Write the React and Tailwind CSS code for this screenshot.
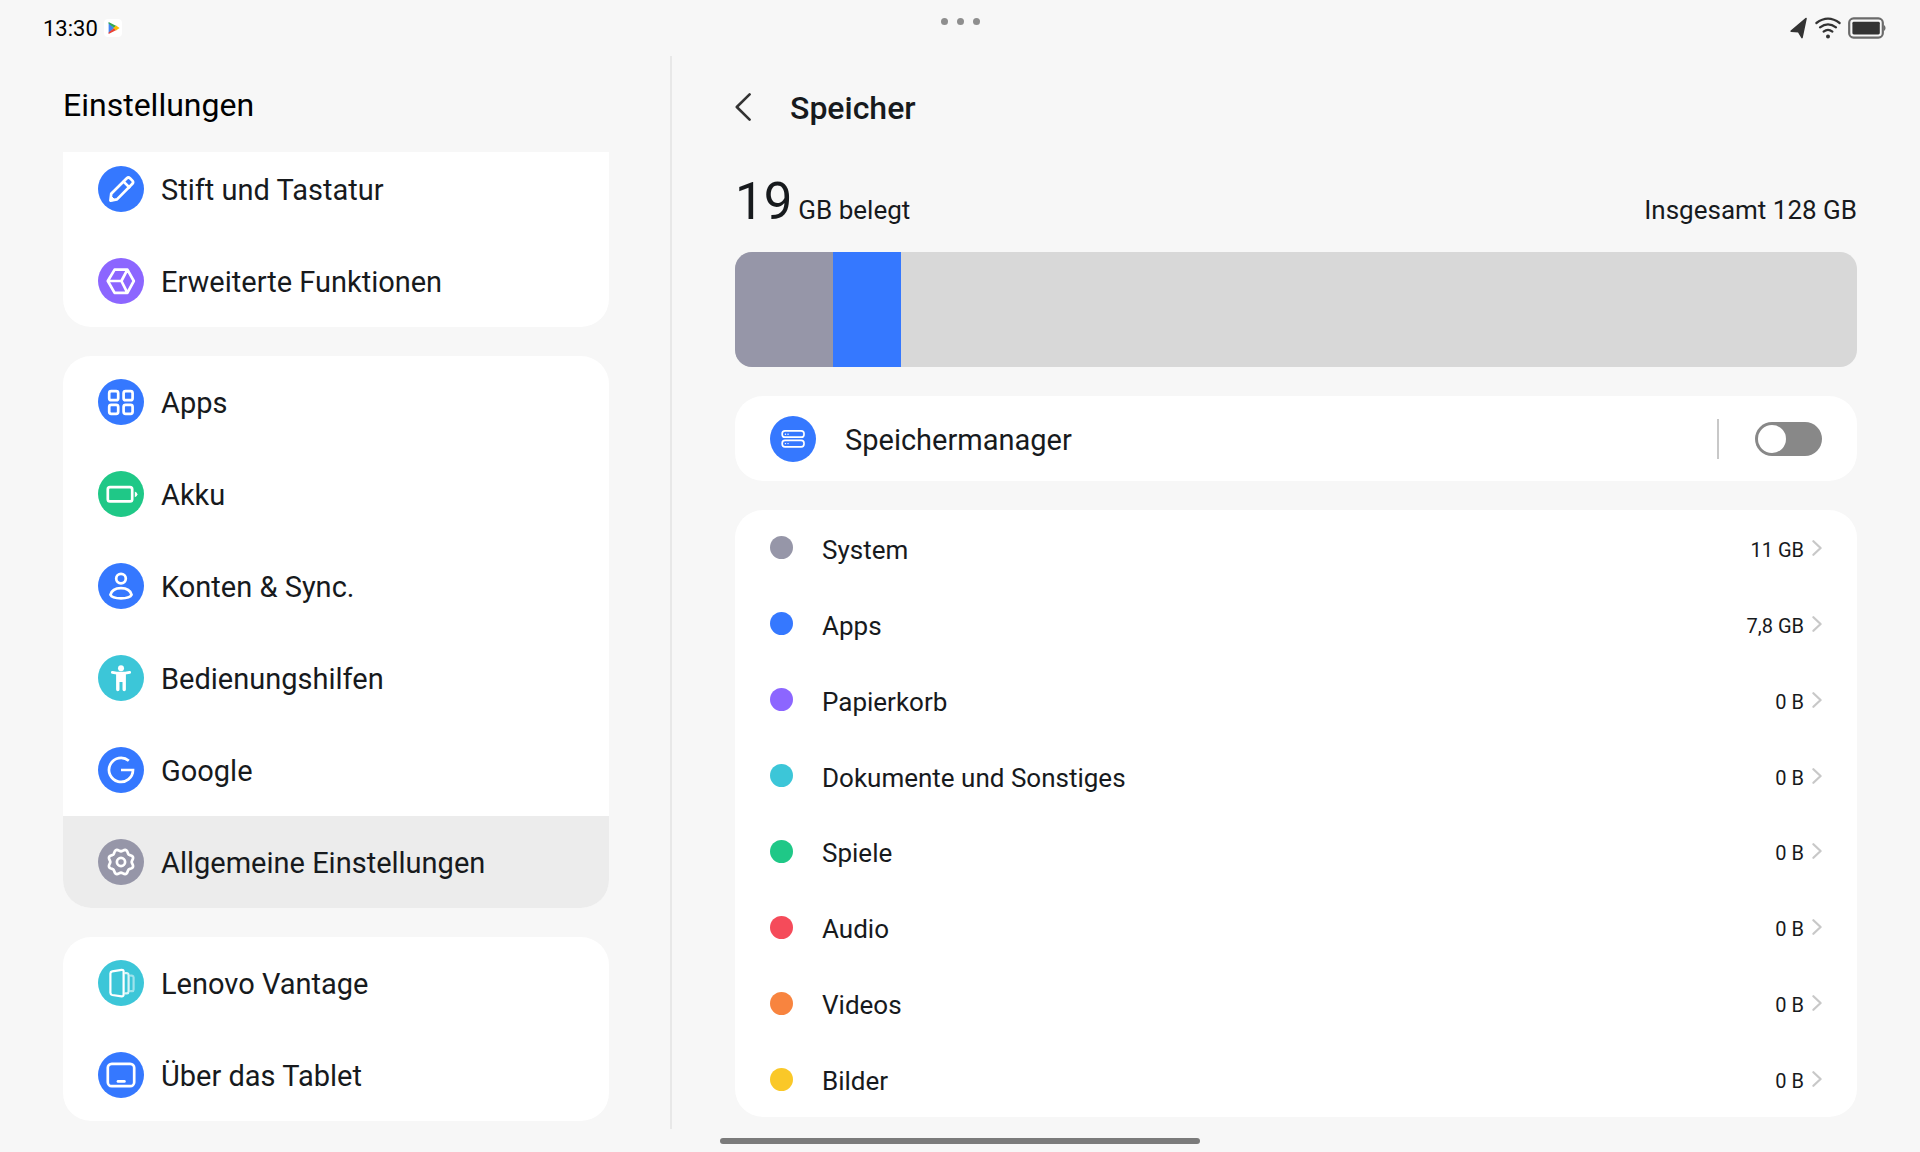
import React, { useState } from "react";
import { clsx } from "clsx";

// Eight soft teeth around the centre of a 46px badge
const gearPath =
  Array.from({ length: 96 }, (_, i) => {
    const a = (i / 96) * Math.PI * 2;
    const r = 11.8 - 1.1 * Math.cos(8 * a);
    const x = (23 + r * Math.cos(a)).toFixed(2);
    const y = (23 + r * Math.sin(a)).toFixed(2);
    return `${i === 0 ? "M" : "L"}${x} ${y}`;
  }).join(" ") + " Z";

const Badge = ({ className, children }) => (
  <svg
    viewBox="0 0 46 46"
    aria-hidden="true"
    className={clsx("size-[46px] shrink-0 rounded-full", className)}
    fill="none"
    stroke="#fff"
    strokeWidth="2.7"
    strokeLinecap="round"
    strokeLinejoin="round"
  >
    {children}
  </svg>
);

const menuGroups = [
  {
    id: "devices",
    className: "h-[175px] justify-end rounded-b-[28px]",
    items: [
      {
        label: "Stift und Tastatur",
        color: "bg-[#3578ff]",
        icon: (
          <>
            <path d="M12.4 34.6 L13.2 27.8 L28.8 12.2 Q30.4 10.8 32 12.2 L34.4 14.6 Q35.8 16.2 34.4 17.8 L19 33.4 Z" />
            <path d="M25.6 15.6 L31.2 21.2" />
            <path d="M12.4 34.6 L13 30 L17 34 Z" fill="#fff" strokeWidth="1" />
          </>
        ),
      },
      {
        label: "Erweiterte Funktionen",
        color: "bg-[#8c66ff]",
        icon: (
          <path d="M16.6 11.6 H29.4 L35.8 23 L29.4 34.8 H16.6 L9.8 23 Z M9.8 23 H23.4 L29.4 11.6 M23.4 23 L29.4 34.8" />
        ),
      },
    ],
  },
  {
    id: "system",
    className: "rounded-[28px]",
    items: [
      {
        label: "Apps",
        color: "bg-[#3578ff]",
        icon: (
          <>
            <rect x="11.2" y="12.2" width="9" height="9" rx="2" />
            <rect x="25.6" y="12.2" width="9" height="9" rx="2" />
            <rect x="11.2" y="25.8" width="9" height="9" rx="2" />
            <rect x="25.6" y="25.8" width="9" height="9" rx="2" />
          </>
        ),
      },
      {
        label: "Akku",
        color: "bg-[#1fc887]",
        icon: (
          <>
            <rect x="9.8" y="16.2" width="24.4" height="14.2" rx="2.2" />
            <path
              d="M36.8 20.4 Q39.4 21.2 39.4 23.3 Q39.4 25.4 36.8 26.2 Z"
              fill="#fff"
              stroke="none"
            />
          </>
        ),
      },
      {
        label: "Konten & Sync.",
        color: "bg-[#3578ff]",
        icon: (
          <>
            <circle cx="23" cy="15.6" r="4.8" />
            <path d="M12.4 31.8 C13.6 27.4 17.6 25.2 23 25.2 C28.4 25.2 32.4 27.4 33.6 31.8 C32.4 34.4 28 35.4 23 35.4 C18 35.4 13.6 34.4 12.4 31.8 Z" />
          </>
        ),
      },
      {
        label: "Bedienungshilfen",
        color: "bg-[#3cc6d8]",
        icon: (
          <>
            <circle cx="23" cy="13.3" r="3" fill="#fff" stroke="none" />
            <path d="M14.4 17.4 Q23 19.2 31.6 17.4" strokeWidth="3" />
            <path d="M19.8 19.4 V34.6 M26.2 19.4 V34.6" strokeWidth="3.4" />
            <path d="M20 18 H26 V27 H20 Z" fill="#fff" stroke="none" />
          </>
        ),
      },
      {
        label: "Google",
        color: "bg-[#3578ff]",
        icon: (
          <path
            d="M30.8 13.8 A12 12 0 1 0 35 23 H23"
            strokeLinecap="butt"
            strokeLinejoin="miter"
          />
        ),
      },
      {
        label: "Allgemeine Einstellungen",
        color: "bg-[#9696a8]",
        active: true,
        icon: (
          <>
            <path d={gearPath} />
            <circle cx="23" cy="23" r="4.1" />
          </>
        ),
      },
    ],
  },
  {
    id: "about",
    className: "rounded-[28px]",
    items: [
      {
        label: "Lenovo Vantage",
        color: "bg-[#3cc6d8]",
        icon: (
          <g strokeWidth="2.2">
            <path d="M14.2 11.4 L23.6 9.8 Q25.6 9.6 25.6 11.6 V34.6 Q25.6 36.6 23.6 36.4 L14.2 35 Q12.4 34.6 12.4 32.8 V13.6 Q12.4 11.8 14.2 11.4 Z" />
            <path
              d="M27.4 13.2 H29 Q30.6 13.4 30.6 15 V31.6 Q30.6 33.2 29 33.4 H27.4"
              opacity="0.8"
            />
            <path
              d="M32.6 15.6 H34 Q35.6 15.8 35.6 17.4 V29.4 Q35.6 31 34 31.2 H32.6"
              opacity="0.5"
            />
          </g>
        ),
      },
      {
        label: "Über das Tablet",
        color: "bg-[#3578ff]",
        icon: (
          <>
            <rect x="9.8" y="11.8" width="26.4" height="22.4" rx="4" />
            <path d="M20 29.4 H26.4" />
          </>
        ),
      },
    ],
  },
];

const categories = [
  { label: "System", size: "11 GB", dot: "bg-[#9696a8]", share: 8.7 },
  { label: "Apps", size: "7,8 GB", dot: "bg-[#3578ff]", share: 6.1 },
  { label: "Papierkorb", size: "0 B", dot: "bg-[#8c66ff]", share: 0 },
  { label: "Dokumente und Sonstiges", size: "0 B", dot: "bg-[#3cc6d8]", share: 0 },
  { label: "Spiele", size: "0 B", dot: "bg-[#1fc887]", share: 0 },
  { label: "Audio", size: "0 B", dot: "bg-[#f54b5a]", share: 0 },
  { label: "Videos", size: "0 B", dot: "bg-[#f8843f]", share: 0 },
  { label: "Bilder", size: "0 B", dot: "bg-[#fac828]", share: 0 },
];

const StatusBar = () => (
  <header className="grid h-14 shrink-0 grid-cols-3">
    <div className="flex items-center gap-[6px] pl-[43px]">
      <time className="pt-[2px] text-[22px] leading-[30px] text-black">13:30</time>
      <svg viewBox="0 0 18 18" className="size-[18px]" aria-hidden="true">
        <rect width="18" height="18" rx="4" fill="#fff" />
        <path d="M4.6 3.4 V14.6 L10 9 Z" fill="#4285f4" />
        <path d="M4.6 3 L12.4 7 L10 9 L4.6 4.6 Z" fill="#34a853" />
        <path d="M4.6 15 L12.4 11 L10 9 L4.6 13.6 Z" fill="#ea4335" />
        <path d="M12 6.6 L15.6 9 L12 11.4 L9.6 9 Z" fill="#fbbc04" />
      </svg>
    </div>
    <div className="flex justify-center gap-[9px] pt-[18px]">
      <span className="size-[7px] rounded-full bg-[#8e8e8e]" />
      <span className="size-[7px] rounded-full bg-[#8e8e8e]" />
      <span className="size-[7px] rounded-full bg-[#8e8e8e]" />
    </div>
    <div className="flex items-center justify-end gap-[7px] pr-[34px]">
      <svg viewBox="0 0 18 22" className="h-[22px] w-[18px]" aria-hidden="true">
        <path
          d="M16 1.6 L1.2 14.2 L8.6 14.8 L12 20.6 Z"
          fill="#333"
          stroke="#333"
          strokeWidth="1.6"
          strokeLinejoin="round"
        />
      </svg>
      <svg
        viewBox="0 0 26 22"
        className="h-[22px] w-[26px]"
        aria-hidden="true"
        fill="none"
        stroke="#333"
        strokeWidth="2.2"
        strokeLinecap="round"
      >
        <path d="M1.4 6 Q13 -2.6 24.6 6" />
        <path d="M5 10.4 Q13 4.2 21 10.4" />
        <path d="M8.6 14.6 Q13 11 17.4 14.6" />
        <circle cx="13" cy="19.4" r="2" fill="#333" stroke="none" />
      </svg>
      <svg viewBox="0 0 38 22" className="h-[22px] w-[38px]" aria-hidden="true">
        <rect
          x="1.2"
          y="1.4"
          width="33.6"
          height="19.2"
          rx="4.4"
          fill="none"
          stroke="#6b6b6b"
          strokeWidth="2.2"
        />
        <rect x="4.4" y="4.8" width="27.4" height="12.6" rx="1.4" fill="#333" />
        <path d="M35.8 7.8 Q37.6 9 37.6 11 Q37.6 13 35.8 14.2 Z" fill="#6b6b6b" />
      </svg>
    </div>
  </header>
);

const Sidebar = () => (
  <aside className="w-[35%] shrink-0 border-r-2 border-[#e8e8e8] pl-[63px] pr-[61px]">
    <h1 className="flex h-24 items-center pt-[2px] text-[32px] leading-10 text-black">
      Einstellungen
    </h1>
    <nav className="flex flex-col gap-[29px]">
      {menuGroups.map((group) => (
        <ul
          key={group.id}
          className={clsx("flex flex-col overflow-hidden bg-white", group.className)}
        >
          {group.items.map((item) => (
            <li key={item.label} className="shrink-0">
              <a
                href="#"
                aria-current={item.active ? "page" : undefined}
                className={clsx(
                  "flex h-[92px] items-center gap-[17px] px-[35px]",
                  item.active && "bg-[#ececec]"
                )}
              >
                <Badge className={item.color}>{item.icon}</Badge>
                <span className="pt-[2px] text-[29px] leading-10">{item.label}</span>
              </a>
            </li>
          ))}
        </ul>
      ))}
    </nav>
  </aside>
);

const StorageManager = () => {
  const [enabled, setEnabled] = useState(false);

  return (
    <section className="flex h-[85px] items-center rounded-[28px] bg-white px-[35px]">
      <Badge className="bg-[#3578ff]">
        <g strokeWidth="1.7">
          <rect x="12.2" y="14.8" width="21.8" height="6.4" rx="2.8" />
          <rect x="12.2" y="24.4" width="21.8" height="6.4" rx="2.8" />
          <path
            d="M15.4 18.2 H15.5 M18 18.2 H18.1 M15.4 27.6 H15.5 M18 27.6 H18.1"
            strokeWidth="1.4"
          />
        </g>
      </Badge>
      <label
        htmlFor="storage-manager"
        className="flex-1 pl-[29px] pt-[2px] text-[29px] leading-10"
      >
        Speichermanager
      </label>
      <span className="mr-9 h-10 w-[2px] bg-[#c8c8c8]" />
      <input
        id="storage-manager"
        type="checkbox"
        role="switch"
        checked={enabled}
        onChange={(e) => setEnabled(e.target.checked)}
        className="flex h-[34px] w-[67px] appearance-none items-center rounded-full bg-[#888888] px-[3px] before:size-7 before:rounded-full before:bg-white before:content-[''] checked:justify-end checked:bg-[#3578ff]"
      />
    </section>
  );
};

const CategoryRow = ({ label, size, dot }) => (
  <li className="flex flex-1">
    <a href="#" className="flex flex-1 items-center px-[35px]">
      <span className={clsx("size-[23px] rounded-full", dot)} />
      <span className="flex-1 pl-[29px] pt-1 text-[26px] leading-9">{label}</span>
      <span className="pt-1 text-[20px] leading-7">{size}</span>
      <svg
        viewBox="0 0 10 16"
        className="ml-2 h-4 w-[10px]"
        aria-hidden="true"
        fill="none"
        stroke="#c8c8c8"
        strokeWidth="2.2"
        strokeLinecap="round"
        strokeLinejoin="round"
      >
        <path d="M1.4 1.2 L8.6 8 L1.4 14.8" />
      </svg>
    </a>
  </li>
);

const StoragePage = () => (
  <main className="min-w-0 flex-1 px-[63px]">
    <div className="flex h-[104px] items-center gap-[39px]">
      <button type="button" aria-label="Zurück">
        <svg
          viewBox="0 0 16 30"
          className="h-[30px] w-4"
          fill="none"
          stroke="#333"
          strokeWidth="2.6"
          strokeLinecap="round"
          strokeLinejoin="round"
        >
          <path d="M14.6 1.4 L1.8 14 L14.6 26.6" />
        </svg>
      </button>
      <h2 className="text-[32px] font-medium leading-10">Speicher</h2>
    </div>

    <div className="flex items-baseline justify-between pb-5 pt-3 text-[26px]">
      <p className="flex items-baseline gap-[6px]">
        <span className="text-[51px] leading-[60px]">19</span>
        <span>GB belegt</span>
      </p>
      <p>Insgesamt 128 GB</p>
    </div>

    <div className="flex h-[115px] overflow-hidden rounded-[17px] bg-[#d8d8d8]">
      {categories.map((c) => (
        <div key={c.label} className={c.dot} style={{ width: `${c.share}%` }} />
      ))}
    </div>

    <div className="flex flex-col gap-[29px] pt-[29px]">
      <StorageManager />
      <ul className="flex min-h-[607px] flex-col rounded-[28px] bg-white">
        {categories.map((c) => (
          <CategoryRow key={c.label} {...c} />
        ))}
      </ul>
    </div>
  </main>
);

const App = () => (
  <div className="flex min-h-screen flex-col bg-[#f7f7f7] font-['Roboto',sans-serif] text-[#171a1d]">
    <StatusBar />
    <div className="flex flex-1">
      <Sidebar />
      <StoragePage />
    </div>
    <footer className="flex h-[23px] shrink-0 items-center justify-center">
      <span className="h-[6px] w-1/4 rounded-full bg-[#7b7b7b]" />
    </footer>
  </div>
);

export default App;
